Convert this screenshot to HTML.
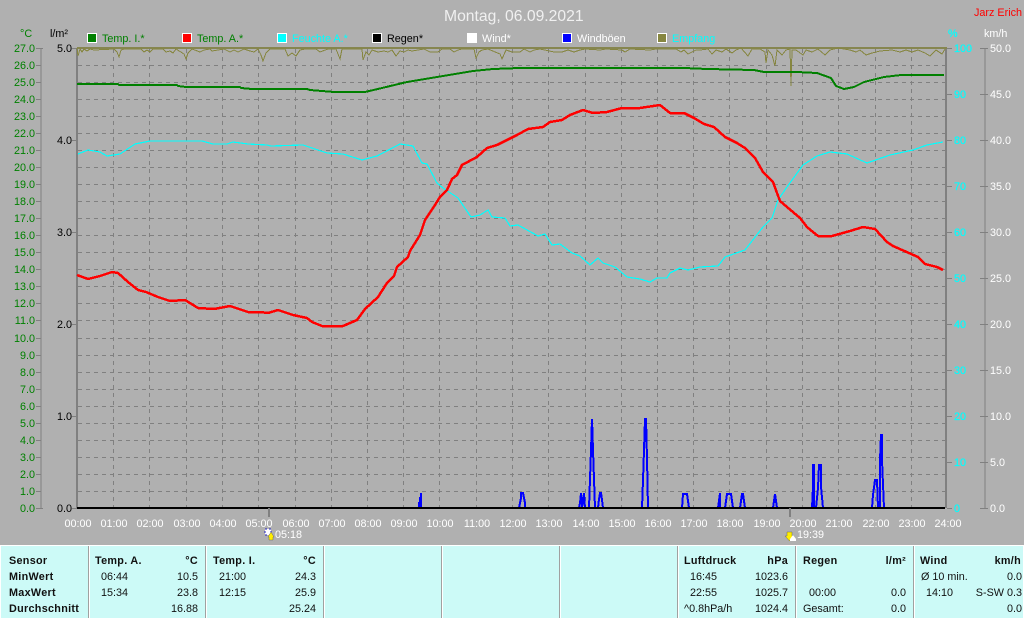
<!DOCTYPE html>
<html><head><meta charset="utf-8"><title>Montag, 06.09.2021</title>
<style>
html,body{margin:0;padding:0;width:1024px;height:618px;overflow:hidden;background:#b0b0b0}
svg{display:block;position:absolute;left:0;top:0}
text{font-family:"Liberation Sans",sans-serif;font-size:10.8px}
.l text{fill:#008000;text-anchor:end}
.b text{fill:#000;text-anchor:end}
.c text{fill:#00ffff;stroke:#00ffff;stroke-width:.2px}
.w text{fill:#fff}
.h text{fill:#fff;text-anchor:middle}
.e{text-anchor:end}
.s{font-weight:bold;letter-spacing:.3px;fill:#000}
.t text{fill:#111}
</style></head><body>
<svg width="1024" height="618" viewBox="0 0 1024 618">
<rect width="1024" height="618" fill="#b0b0b0"/>
<path shape-rendering="crispEdges" fill="none" stroke="#808080" stroke-dasharray="4 4" d="M78 65.5H945M78 82.5H945M78 99.5H945M78 116.5H945M78 133.5H945M78 150.5H945M78 167.5H945M78 184.5H945M78 201.5H945M78 218.5H945M78 235.5H945M78 252.5H945M78 269.5H945M78 286.5H945M78 303.5H945M78 320.5H945M78 338.5H945M78 355.5H945M78 372.5H945M78 389.5H945M78 406.5H945M78 423.5H945M78 440.5H945M78 457.5H945M78 474.5H945M78 491.5H945"/>
<path shape-rendering="crispEdges" fill="none" stroke="#808080" stroke-dasharray="4 4" d="M113.500 49V513M149.500 49V513M186.500 49V513M222.500 49V513M258.500 49V513M295.500 49V513M331.500 49V513M367.500 49V513M403.500 49V513M439.500 49V513M476.500 49V513M512.500 49V513M548.500 49V513M585.500 49V513M621.500 49V513M657.500 49V513M693.500 49V513M729.500 49V513M766.500 49V513M802.500 49V513M838.500 49V513M875.500 49V513M911.500 49V513"/>
<path shape-rendering="crispEdges" fill="none" stroke="#808080" d="M41 48V508M36 48.500H43M36 65.500H41M36 82.500H41M36 99.500H41M36 116.500H41M36 133.500H41M36 150.500H41M36 167.500H41M36 184.500H41M36 201.500H41M36 218.500H41M36 235.500H41M36 252.500H41M36 269.500H41M36 286.500H41M36 303.500H41M36 320.500H41M36 338.500H41M36 355.500H41M36 372.500H41M36 389.500H41M36 406.500H41M36 423.500H41M36 440.500H41M36 457.500H41M36 474.500H41M36 491.500H41M36 508.500H43"/>
<path shape-rendering="crispEdges" fill="none" stroke="#808080" d="M72 48.500H77M72 140.500H77M72 232.500H77M72 324.500H77M72 416.500H77M72 508.500H77M947 48.500H952M947 94.500H952M947 140.500H952M947 186.500H952M947 232.500H952M947 278.500H952M947 324.500H952M947 370.500H952M947 416.500H952M947 462.500H952M947 508.500H952M985 48V509M980 48.500H988M980 94.500H988M980 140.500H988M980 186.500H988M980 232.500H988M980 278.500H988M980 324.500H988M980 370.500H988M980 416.500H988M980 462.500H988M980 508.500H988"/>
<rect x="76" y="48" width="2" height="460" fill="#808080" shape-rendering="crispEdges"/>
<rect x="945" y="48" width="2" height="460" fill="#808080" shape-rendering="crispEdges"/>
<rect x="77" y="47" width="870" height="2" fill="#868650" shape-rendering="crispEdges"/>

<polyline fill="none" stroke="#868640" shape-rendering="crispEdges" points="77,48 78,56 80,49 82,52 84,49 87,51 90,49 94,50 114,49 117,52 119,57 121,50 124,49 141,49 144,52 147,50 150,52 153,49 163,49 166,52 170,51 173,53 176,49 184,54 186,59 188,53 192,49 200,52 204,50 210,49 212,51 218,50 224,49 230,52 234,50 238,52 244,49 250,51 254,52 258,49 261,55 263,61 266,53 270,49 285,49 288,56 292,53 296,56 300,50 305,49 316,49 320,52 328,49 336,49 340,59 342,49 362,49 363,60 366,52 369,55 372,50 378,52 384,51 388,52 392,50 396,56 400,51 404,52 408,50 412,51 424,49 430,52 438,52 442,49 450,49 454,52 458,50 462,49 474,49 476,58 479,52 482,50 488,49 500,54 502,59 506,50 512,52 520,52 524,49 530,52 534,50 540,49 554,52 562,52 568,50 574,52 580,50 585,49 600,50 606,49 622,50 625,52 630,49 650,50 656,49 676,49 681,52 684,50 688,54 692,52 696,50 700,50 708,49 712,54 716,50 722,52 726,49 732,53 736,50 741,48 748,56 752,49 760,49 765,52 766,63 768,50 772,55 775,66 777,50 782,55 786,50 790,49 791,86 792,50 796,50 803,55 806,50 812,52 818,49 825,55 830,50 838,48 850,50 856,52 860,50 866,55 872,53 880,51 892,50 900,52 906,50 912,52 918,50 925,53 930,56 936,50 942,54 945,49"/>

<polyline fill="none" stroke="#008000" stroke-width="2" shape-rendering="crispEdges" stroke-linejoin="round" points="77,84 118,84 119,85 177,85 178,86 186,87 240,87 241,88 252,89 307,89 310,90 334,92 365,92 382,88 407,82 437,77 473,71 493,69 520,68 684,68 707,69 754,70 764,72 797,72 817,73 831,78 836,86 844,89 854,87 864,82 884,77 901,75 944,75"/>

<polyline fill="none" stroke="#00ffff" stroke-width="1.2" shape-rendering="crispEdges" points="78,154 88,150 100,152 107,156 120,154 135,144 150,141 202,141 213,144 227,144 233,142 248,144 267,145 271,146 303,145 327,153 343,154 362,160 377,156 400,144 413,146 422,163 427,164 437,183 443,188 458,198 471,217 480,215 488,210 492,217 505,218 510,226 518,225 538,236 545,234 552,245 560,244 572,253 580,256 590,265 598,258 603,263 615,267 627,277 640,279 650,282 657,278 667,278 670,273 680,268 688,270 700,267 718,266 725,257 745,250 763,227 772,218 778,200 787,187 803,165 817,156 830,152 847,154 867,163 890,155 913,150 927,145 943,142"/>

<polyline fill="none" stroke="#ff0000" stroke-width="2.5" shape-rendering="crispEdges" stroke-linejoin="round" points="77,275 88,279 100,276 112,272 118,273 128,282 138,290 146,292 158,297 170,301 185,300 198,308 214,309 230,306 248,312 260,312 268,313 278,310 293,315 307,318 312,322 322,326 343,326 357,320 365,309 378,297 387,283 394,276 397,267 408,257 410,251 420,235 425,220 435,205 440,197 447,190 452,179 457,175 462,165 477,157 487,148 497,145 517,135 528,129 543,127 550,122 562,120 570,115 583,110 593,113 607,112 622,108 640,108 660,105 670,113 684,113 694,118 704,124 714,127 725,137 737,143 745,148 755,158 763,172 773,182 777,193 780,201 787,207 800,218 807,227 813,232 818,236 832,236 850,231 863,227 875,229 887,242 893,246 918,257 925,264 937,267 943,270"/>

<g fill="none" stroke="#0000ff" stroke-width="2" shape-rendering="crispEdges">
<polyline points="419,508 419,503 420,503 420,498 421,498 421,493 421,508"/>
<polyline points="519,508 520,503 521,498 521,493 523,493 524,498 525,503 525,508"/>
<polyline points="579,508 580,503 581,493 582,508 584,493 585,508"/>
<polyline points="589,508 590,479 591,450 592,419 593,450 594,479 595,508"/>
<polyline points="598,508 599,499 600,493 601,493 602,500 603,508"/>
<polyline points="642,508 643,480 644,450 645,419 646,419 647,458 648,508"/>
<polyline points="682,508 683,494 687,494 689,508"/>
<polyline points="718,508 720,493 720,508"/>
<polyline points="725,508 727,494 731,494 733,508"/>
<polyline points="740,508 742,494 743,494 745,508"/>
<polyline points="773,508 775,494 777,508"/>
<polyline points="812,508 813,487 813,465 814,465 814,508 816,508 818,488 819,465 821,465 821,487 823,508"/>
<polyline points="872,508 873,495 875,480 877,480 878,508"/>
<polyline points="880,508 880,460 881,435 882,435 882,460 883,484 884,508"/>
</g>
<rect x="77" y="507" width="868" height="2" fill="#000" shape-rendering="crispEdges"/>
<rect x="268" y="508" width="2" height="9" fill="#808080" shape-rendering="crispEdges"/>
<rect x="789" y="508" width="2" height="9" fill="#808080" shape-rendering="crispEdges"/>

<text x="444" y="21" fill="#f0f0f0" style="font-size:15.7px">Montag, 06.09.2021</text>
<text x="974" y="16" fill="#ff0000">Jarz Erich</text>
<text x="20" y="37" fill="#008000">°C</text>
<text x="50" y="37" fill="#000">l/m²</text>
<text x="948" y="37" fill="#00ffff" stroke="#00ffff" stroke-width=".2">%</text>
<text x="984" y="37" fill="#fff">km/h</text>

<g shape-rendering="crispEdges" stroke="#fff">
<rect x="87.500" y="33.500" width="9" height="9" fill="#008000"/>
<rect x="182.500" y="33.500" width="9" height="9" fill="#ff0000"/>
<rect x="277.500" y="33.500" width="9" height="9" fill="#00ffff"/>
<rect x="372.500" y="33.500" width="9" height="9" fill="#000"/>
<rect x="467.500" y="33.500" width="9" height="9" fill="#fff"/>
<rect x="562.500" y="33.500" width="9" height="9" fill="#0000ff"/>
<rect x="657.500" y="33.500" width="9" height="9" fill="#868640"/>
</g>
<text x="102" y="42" fill="#008000">Temp. I.*</text>
<text x="197" y="42" fill="#008000">Temp. A.*</text>
<text x="292" y="42" fill="#00ffff">Feuchte A.*</text>
<text x="387" y="42" fill="#000">Regen*</text>
<text x="482" y="42" fill="#fff">Wind*</text>
<text x="577" y="42" fill="#fff">Windböen</text>
<text x="672" y="42" fill="#00ffff">Empfang</text>

<g class="l">
<text x="35" y="52">27.0</text><text x="35" y="69">26.0</text><text x="35" y="86">25.0</text><text x="35" y="103">24.0</text><text x="35" y="120">23.0</text><text x="35" y="137">22.0</text><text x="35" y="154">21.0</text><text x="35" y="171">20.0</text><text x="35" y="188">19.0</text><text x="35" y="205">18.0</text><text x="35" y="222">17.0</text><text x="35" y="239">16.0</text><text x="35" y="256">15.0</text><text x="35" y="273">14.0</text><text x="35" y="290">13.0</text><text x="35" y="307">12.0</text><text x="35" y="324">11.0</text><text x="35" y="342">10.0</text><text x="35" y="359">9.0</text><text x="35" y="376">8.0</text><text x="35" y="393">7.0</text><text x="35" y="410">6.0</text><text x="35" y="427">5.0</text><text x="35" y="444">4.0</text><text x="35" y="461">3.0</text><text x="35" y="478">2.0</text><text x="35" y="495">1.0</text><text x="35" y="512">0.0</text>
</g>
<g class="b">
<text x="72" y="52">5.0</text><text x="72" y="144">4.0</text><text x="72" y="236">3.0</text><text x="72" y="328">2.0</text><text x="72" y="420">1.0</text><text x="72" y="512">0.0</text>
</g>
<g class="c">
<text x="954" y="52">100</text><text x="954" y="98">90</text><text x="954" y="144">80</text><text x="954" y="190">70</text><text x="954" y="236">60</text><text x="954" y="282">50</text><text x="954" y="328">40</text><text x="954" y="374">30</text><text x="954" y="420">20</text><text x="954" y="466">10</text><text x="954" y="512">0</text>
</g>
<g class="w">
<text x="990" y="52">50.0</text><text x="990" y="98">45.0</text><text x="990" y="144">40.0</text><text x="990" y="190">35.0</text><text x="990" y="236">30.0</text><text x="990" y="282">25.0</text><text x="990" y="328">20.0</text><text x="990" y="374">15.0</text><text x="990" y="420">10.0</text><text x="990" y="466">5.0</text><text x="990" y="512">0.0</text>
</g>
<g class="h">
<text x="78" y="527">00:00</text><text x="114" y="527">01:00</text><text x="150" y="527">02:00</text><text x="187" y="527">03:00</text><text x="223" y="527">04:00</text><text x="259" y="527">05:00</text><text x="296" y="527">06:00</text><text x="332" y="527">07:00</text><text x="368" y="527">08:00</text><text x="404" y="527">09:00</text><text x="440" y="527">10:00</text><text x="477" y="527">11:00</text><text x="513" y="527">12:00</text><text x="549" y="527">13:00</text><text x="586" y="527">14:00</text><text x="622" y="527">15:00</text><text x="658" y="527">16:00</text><text x="694" y="527">17:00</text><text x="730" y="527">18:00</text><text x="767" y="527">19:00</text><text x="803" y="527">20:00</text><text x="839" y="527">21:00</text><text x="876" y="527">22:00</text><text x="912" y="527">23:00</text><text x="948" y="527">24:00</text>
</g>
<rect x="265" y="529" width="6" height="6" fill="#fff" stroke="#2020c0" stroke-width="1" stroke-dasharray="2 2" shape-rendering="crispEdges"/>
<path d="M271 532L274 537H273V540H269V537H268Z" fill="#ffee00" stroke="#555" stroke-width=".4"/>
<text x="275" y="538" fill="#fff">05:18</text>
<path d="M787 532H792V536H794L789.500 541L785 536H787Z" fill="#ffee00" stroke="#555" stroke-width=".4"/>
<path d="M790 539L793 535L796 539Z M790 539H796V541H790Z" fill="#fff"/>
<text x="797" y="538" fill="#fff">19:39</text>

<rect x="0" y="545" width="1024" height="73" fill="#ccfaf7"/>
<rect x="0" y="545" width="1024" height="1" fill="#fff"/>
<g fill="#a0a0a0" shape-rendering="crispEdges"><rect x="88" y="546" width="1" height="72"/><rect x="205" y="546" width="1" height="72"/><rect x="323" y="546" width="1" height="72"/><rect x="441" y="546" width="1" height="72"/><rect x="559" y="546" width="1" height="72"/><rect x="677" y="546" width="1" height="72"/><rect x="795" y="546" width="1" height="72"/><rect x="913" y="546" width="1" height="72"/></g>
<g fill="#fff" shape-rendering="crispEdges"><rect x="89" y="546" width="1" height="72"/><rect x="206" y="546" width="1" height="72"/><rect x="324" y="546" width="1" height="72"/><rect x="442" y="546" width="1" height="72"/><rect x="560" y="546" width="1" height="72"/><rect x="678" y="546" width="1" height="72"/><rect x="796" y="546" width="1" height="72"/><rect x="914" y="546" width="1" height="72"/><rect x="0" y="546" width="1" height="72"/><rect x="1023" y="546" width="1" height="72"/></g>

<g class="t">
<text class="s" x="9" y="564">Sensor</text><text class="s" x="9" y="580">MinWert</text><text class="s" x="9" y="596">MaxWert</text><text class="s" x="9" y="612">Durchschnitt</text>
<text class="s" x="95" y="564">Temp. A.</text><text class="s e" x="198" y="564">°C</text>
<text x="101" y="580">06:44</text><text class="e" x="198" y="580">10.5</text>
<text x="101" y="596">15:34</text><text class="e" x="198" y="596">23.8</text>
<text class="e" x="198" y="612">16.88</text>
<text class="s" x="213" y="564">Temp. I.</text><text class="s e" x="316" y="564">°C</text>
<text x="219" y="580">21:00</text><text class="e" x="316" y="580">24.3</text>
<text x="219" y="596">12:15</text><text class="e" x="316" y="596">25.9</text>
<text class="e" x="316" y="612">25.24</text>
<text class="s" x="684" y="564">Luftdruck</text><text class="s e" x="788" y="564">hPa</text>
<text x="690" y="580">16:45</text><text class="e" x="788" y="580">1023.6</text>
<text x="690" y="596">22:55</text><text class="e" x="788" y="596">1025.7</text>
<text x="684" y="612">^0.8hPa/h</text><text class="e" x="788" y="612">1024.4</text>
<text class="s" x="803" y="564">Regen</text><text class="s e" x="906" y="564">l/m²</text>
<text x="809" y="596">00:00</text><text class="e" x="906" y="596">0.0</text>
<text x="803" y="612">Gesamt:</text><text class="e" x="906" y="612">0.0</text>
<text class="s" x="920" y="564">Wind</text><text class="s e" x="1021" y="564">km/h</text>
<text x="921" y="580">Ø 10 min.</text><text class="e" x="1022" y="580">0.0</text>
<text x="926" y="596">14:10</text><text class="e" x="1022" y="596">S-SW 0.3</text>
<text class="e" x="1022" y="612">0.0</text>
</g>
</svg>
</body></html>
